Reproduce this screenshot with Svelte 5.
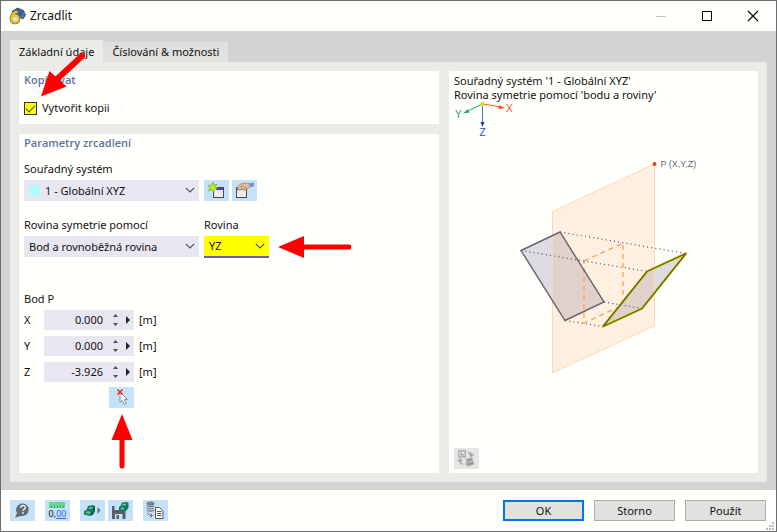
<script>
  let tab = $state('base');
  let copy = $state(true);
  let point = $state([
    { axis: 'X', value: '0.000' },
    { axis: 'Y', value: '0.000' },
    { axis: 'Z', value: '-3.926' }
  ]);
</script>

{#snippet chevron()}
  <svg class="chevron" width="10" height="6" viewBox="0 0 10 6" aria-hidden="true"><path d="M.8 .8 5 5 9.2 .8" fill="none" stroke="#505058" stroke-width="1.2" /></svg>
{/snippet}

<div class="window">
  <header>
    <svg width="18" height="18" viewBox="0 0 18 18" aria-hidden="true">
      <path d="M4 4.500 9.500 1l6 2.500L17.500 8 15 12l-4-2-6-4z" fill="#4f74b8" stroke="#2e4470" stroke-width=".8" />
      <path d="M6 4l9 4M8 2l8 4M10.500 2 8.500 6M14 3l-2.500 6" stroke="#26395f" stroke-width=".6" />
      <path d="M9.500 4.500C6 5 3.500 8 3.500 12" fill="none" stroke="#6c5b14" stroke-width="3.600" />
      <circle cx="7" cy="12" r="3.500" fill="#fffffc" stroke="#6c5b14" stroke-width="3.600" />
      <path d="M9.500 4.500C6 5 3.500 8 3.500 12" fill="none" stroke="#e6c63a" stroke-width="2.400" />
      <circle cx="7" cy="12" r="3.500" fill="#dce0e8" stroke="#e6c63a" stroke-width="2.400" />
    </svg>
    <h1>Zrcadlit</h1>
    <div class="controls">
      <button aria-label="Minimalizovat"><svg width="12" height="12" viewBox="0 0 12 12"><path d="M1 6.500h10" stroke="#c5c7c3" /></svg></button>
      <button aria-label="Maximalizovat"><svg width="12" height="12" viewBox="0 0 12 12"><path d="M1.500 1.500h9v9h-9z" fill="none" stroke="#000" /></svg></button>
      <button aria-label="Zavřít"><svg width="12" height="12" viewBox="0 0 12 12"><path d="m1 1 10 10M11 1 1 11" stroke="#000" stroke-width="1.100" /></svg></button>
    </div>
  </header>

  <main>
    <div class="tabs" role="tablist">
      <button role="tab" aria-selected={tab === 'base'} class:active={tab === 'base'} onclick={() => (tab = 'base')}>Základní údaje</button>
      <button role="tab" aria-selected={tab === 'opts'} class:active={tab === 'opts'} onclick={() => (tab = 'opts')}>Číslování &amp; možnosti</button>
    </div>

    <div class="panel">
      <div class="left">
        <section class="card">
          <h2>Kopírovat</h2>
          <label class="check"><input type="checkbox" bind:checked={copy} />Vytvořit kopii</label>
        </section>

        <section class="card grow">
          <h2>Parametry zrcadlení</h2>
          <div class="group first">
            <label class="caption" for="cs">Souřadný systém</label>
            <div class="line">
              <div class="select wide">
                <span class="swatch"></span>
                <select id="cs" class="with-swatch"><option>1 - Globální XYZ</option></select>
                {@render chevron()}
              </div>
              <div class="pair">
                <button class="tool" aria-label="Nový souřadný systém">
                  <svg width="21" height="19" viewBox="0 0 21 19">
                    <rect x="7.500" y="6.500" width="10" height="10" fill="#ececec" stroke="#4a4a4a" />
                    <path d="M8 7h2v2H8z" fill="#fff" /><path d="M10 7h7v2h-7z" fill="#3c43e0" />
                    <path d="m7 1 1 3.300L11 3 9.300 5.700 12 7.500 8.500 8 8 11.500 6 8.500 2.500 10 4 7 2 4.500l3.500-.2z" fill="#c0ec20" stroke="#5c9c20" stroke-width=".6" />
                  </svg>
                </button>
                <button class="tool" aria-label="Upravit souřadný systém">
                  <svg width="21" height="19" viewBox="0 0 21 19">
                    <rect x="2.500" y="6.500" width="10" height="10" fill="#ececec" stroke="#4a4a4a" />
                    <path d="M3 7h9v2H3z" fill="#3c43e0" />
                    <path d="m14 2.500 6-1v4l-5 1z" fill="#6a9ad4" />
                    <path d="M3 7.500C3.500 5 7 2 10 2c3.500 0 6 .5 6.500 3L13.500 8 10 9.500 8.500 8.500 5.500 9z" fill="#dcbc9c" stroke="#9a7a5c" stroke-width=".7" />
                    <path d="m6 6.500 3-2M8.500 8l3-2.500M11 8.500 13 7" stroke="#9a7a5c" stroke-width=".7" />
                  </svg>
                </button>
              </div>
            </div>
          </div>

          <div class="line second">
            <div class="group wide">
              <label class="caption" for="by">Rovina symetrie pomocí</label>
              <div class="select">
                <select id="by"><option>Bod a rovnoběžná rovina</option></select>
                {@render chevron()}
              </div>
            </div>
            <div class="group narrow">
              <label class="caption" for="plane">Rovina</label>
              <div class="select marked">
                <select id="plane"><option>YZ</option></select>
                {@render chevron()}
              </div>
              <svg class="arrow a-plane" width="73" height="24" viewBox="0 0 73 24" aria-hidden="true"><path d="M0 12 26 1v22z" fill="#f00" /><path d="M25 12h46" stroke="#f00" stroke-width="5" stroke-linecap="round" /></svg>
            </div>
          </div>

          <div class="point">
            <div class="caption">Bod P</div>
            <div class="rows">
              {#each point as p}
                <div class="row">
                  <label for={'p' + p.axis}>{p.axis}</label>
                  <div class="num">
                    <input id={'p' + p.axis} type="text" bind:value={p.value} />
                    <svg width="20" height="14" viewBox="0 0 20 14" aria-hidden="true"><path d="M0 4 2.500 1 5 4zM0 10l2.500 3L5 10z" fill="#505050" /><path d="m13 3 4 4-4 4z" fill="#222" /></svg>
                  </div>
                  <span>[m]</span>
                </div>
              {/each}
            </div>
            <div class="pick">
              <button class="tool" aria-label="Vybrat bod">
                <svg width="21" height="19" viewBox="0 0 21 19">
                  <path d="M9 4v10.500l2.300-2 2 4 2-.9-1.900-3.900 3-.2z" fill="#fff" stroke="#7c828c" stroke-width=".9" />
                  <path d="m6.500 1.500 5 5M11.500 1.500l-5 5" stroke="#f01818" stroke-width="1.400" />
                </svg>
              </button>
              <svg class="arrow a-pick" width="22" height="56" viewBox="0 0 22 56" aria-hidden="true"><path d="m11 0 10.500 26H.500z" fill="#f00" /><path d="M11 25v27" stroke="#f00" stroke-width="5" stroke-linecap="round" /></svg>
            </div>
          </div>
        </section>
      </div>

      <section class="card preview">
        <p>Souřadný systém '1 - Globální XYZ'</p>
        <p>Rovina symetrie pomocí 'bodu a roviny'</p>
        <svg class="scene" viewBox="454 102 299 346" preserveAspectRatio="xMidYMin meet" role="img" aria-label="Náhled zrcadlení">
          <path d="M482.500 104 469 110.500" stroke="#16a878" />
          <path d="m463 113.500 5-4.500 1.500 3.500z" fill="#16a878" />
          <path d="m482.500 104 17 2.800" stroke="#ff5a20" />
          <path d="m505 108-6.500 1 .7-3.800z" fill="#ff4010" />
          <path d="M482.500 104v19" stroke="#5878dc" />
          <path d="m482.500 127-2-5h4z" fill="#1738c8" />
          <circle cx="482.500" cy="104" r="2" fill="#e6d800" />
          <g font-size="10">
            <text x="455" y="118" fill="#16a878">Y</text>
            <text x="506" y="112" fill="#ff4a18">X</text>
            <text x="479.500" y="136" fill="#2848cc">Z</text>
          </g>
          <path d="m521 250.500 39-18.500 44 70-39 18.500z" fill="#dcdce2" />
          <path d="m686 253.500-39 18-44 55 39-18z" fill="#dcdce2" />
          <path d="m552.500 211.500 102-47.500v161.500l-102 47.500z" fill="#ff8c32" fill-opacity=".13" stroke="#fbd9b8" />
          <path d="m584 261 39-18v62l-39 18z" fill="none" stroke="#ffa050" stroke-width="1.300" stroke-dasharray="5 4" />
          <path d="m560 232 126 21.500M521 250.500l126 21M604 302l38 6.500M565 320.500l38 6" stroke="#66606e" stroke-width="1.200" stroke-dasharray="1.200 3" />
          <path d="m521 250.500 39-18.500 44 70-39 18.500z" fill="none" stroke="#6a606c" stroke-width="1.400" />
          <path d="m686 253.500-39 18-44 55 39-18z" fill="none" stroke="#dcdc20" stroke-width="2.800" stroke-linejoin="round" />
          <path d="m686 253.500-39 18-44 55 39-18z" fill="none" stroke="#5c5838" stroke-width="1.300" />
          <circle cx="654.500" cy="164" r="2" fill="#ff3c00" />
          <text x="660.500" y="167" font-size="9" fill="#6a6a78">P (X,Y,Z)</text>
        </svg>
        <button class="tool off" disabled aria-label="Přepnout náhled">
          <svg width="21" height="19" viewBox="0 0 21 19">
            <path d="M2.800 1.800h6.500v6H2.800z" fill="none" stroke="#a6a6a6" stroke-width="1.300" />
            <path d="M4.500 3.500h1.500V5h1.800v1.500H4.500z" fill="#a6a6a6" />
            <path d="M12 3.500c3 0 3.500 1 3.500 3M13.500 5l2 2.500L17.500 5M7 15c-2.500 0-3-2-3-4M2 12.500l2-2.500 2 2.500" fill="none" stroke="#a6a6a6" stroke-width="1.300" />
            <path d="m9 10 6-1.500 2 .8v2.700l1 1v3l-5.500 1.500-3-1.500v-3l1-1z" fill="#b4b4b4" />
            <path d="m11 11.500 5-1.300M11.500 15.500l5.500-1.500" stroke="#929292" stroke-width="1.300" />
          </svg>
        </button>
      </section>
    </div>
    <svg class="arrow a-copy" width="50" height="48" viewBox="0 0 50 48" aria-hidden="true"><path d="M0 46.500 8.500 21l17 15.500z" fill="#f00" /><path d="M15 30 41 6" stroke="#f00" stroke-width="6" stroke-linecap="round" /></svg>
  </main>

  <footer>
    <div class="tools">
      <button class="tool" aria-label="Nápověda">
        <svg width="21" height="19" viewBox="0 0 21 19">
          <path d="M3 16.500 5 12A6.300 6.300 0 1 1 9.500 15z" fill="#666a6c" />
          <path d="M8.600 6.700c0-2.900 4.800-2.900 4.800-.2 0 1.600-2.400 1.800-2.400 3.500M11 11v1.800" fill="none" stroke="#dcecf8" stroke-width="1.500" />
        </svg>
      </button>
      <button class="tool gap" aria-label="Jednotky a desetinná místa">
        <span class="units"><svg width="16" height="6" viewBox="0 0 16 6"><path d="M0 0h16v6H0z" fill="#68d890" /><path d="M2.500 6V3.500M5.500 6V3.500M8.500 6V3.500M11.500 6V3.500M14.500 6V3.500" stroke="#38a860" /></svg><span>0,<u>00</u></span></span>
      </button>
      <button class="tool gap" aria-label="Převzít z objektu">
        <svg width="21" height="19" viewBox="0 0 21 19">
          <path d="m2 10 2.500-1L6 5l5-1 2 1v5l-2 4-3 1-6-1.500z" fill="#14795a" />
          <path d="m7 6.500 3.500-.7v1.700l-3.500.8zM3.500 11l2-.8 3 .6-.5 2.200-3.500-.4z" fill="#6cc4a0" />
          <path d="M12 6v5l-3 2" fill="none" stroke="#0b4a38" />
          <path d="m15.500 6 3 3.500-3 3.500z" fill="#666a6c" />
        </svg>
      </button>
      <button class="tool" aria-label="Uložit nastavení">
        <svg width="21" height="19" viewBox="0 0 21 19">
          <path d="M2 5h10l3.500 3v10H2z" fill="#5c6064" />
          <path d="M4.500 5H11v4H4.500zM5 13h7.500v5H5z" fill="#c4e2f8" />
          <path d="M6.500 14h2.500v4H6.500z" fill="#5c6064" />
          <path d="m9 6 1.500-1L12 1.500 17 1l1.500 1v5L16 10l-3.500 1L9 9z" fill="#14795a" />
          <path d="m12.500 3 3.500-.5v1.700l-3.500.6zM10.500 7l1.500-.6 2.300.5-.4 1.800-2.600-.3z" fill="#6cc4a0" />
        </svg>
      </button>
      <button class="tool gap" aria-label="Načíst z databáze">
        <svg width="21" height="19" viewBox="0 0 21 19">
          <ellipse cx="5.500" cy="2.500" rx="3.500" ry="1.500" fill="#8a8e92" stroke="#666a6e" />
          <path d="M2 4.500c1 1.600 6 1.600 7 0M2 6.800c1 1.600 6 1.600 7 0M2 9c1 1.600 6 1.600 7 0" fill="none" stroke="#666a6e" stroke-width="1.200" />
          <path d="M3 11.500c0 2 1 3 4 3M5.500 12.500l2 2-2 2" fill="none" stroke="#666a6e" />
          <path d="M10.500 6.500h4l3.500 3.500v7.500h-7.500z" fill="#fff" stroke="#54585c" />
          <path d="M12 10.500h4.500M12 12.500h4.500M12 14.500h4.500" stroke="#54585c" />
        </svg>
      </button>
    </div>
    <div class="actions">
      <button class="default">OK</button>
      <button>Storno</button>
      <button>Použít</button>
    </div>
    <svg class="grip" width="9" height="9" viewBox="0 0 9 9" aria-hidden="true"><path d="M6 0h2v2H6zM3 3h2v2H3zM6 3h2v2H6zM0 6h2v2H0zM3 6h2v2H3zM6 6h2v2H6z" fill="#bcbcbc" /></svg>
  </footer>
</div>

<style>
  .window {
    box-sizing: border-box;
    min-height: 100vh;
    display: flex;
    flex-direction: column;
    border: 1px solid #6c6c6c;
    background: #fffffc;
    color: #111;
    font: 11px/18px 'Noto Sans', 'Open Sans', sans-serif;
  }
  button, input, select { font: inherit; color: inherit; margin: 0; border: 0; border-radius: 0; box-sizing: border-box; }
  h1, h2, p { margin: 0; }
  svg { display: block; }

  header { display: flex; align-items: center; height: 30px; padding-left: 7px; gap: 4px; }
  h1 { font-size: 12px; font-weight: 400; flex: 1; }
  .controls { display: flex; }
  .controls button { width: 46px; height: 30px; padding: 0; background: none; display: grid; place-items: center; }

  main { position: relative; flex: 1; display: flex; flex-direction: column; background: #d3d3d5; padding: 9px 9px 8px; }
  .tabs { display: flex; align-items: flex-end; }
  .tabs button { height: 20px; padding: 0 9px; background: #e0e0df; }
  .tabs button.active { height: 22px; padding-top: 2px; background: #ebece8; }
  .panel { flex: 1; background: #ebece8; padding: 9px; display: grid; grid-template-columns: 420fr 309fr; gap: 10px; }
  .left { display: flex; flex-direction: column; gap: 10px; }
  .card { background: #fffffc; padding: 0 5px 6px; }
  .grow { flex: 1; }
  h2 { font: 600 11px/18px 'Open Sans', 'Noto Sans', sans-serif; color: #5d739c; }

  .check { display: flex; align-items: center; gap: 5px; height: 20px; margin-top: 9px; }
  .check input { appearance: none; width: 13px; height: 13px; background: #ff0; border: 1px solid #333; display: grid; place-items: center; }
  .check input:checked::after { content: ''; width: 9px; height: 5px; box-sizing: border-box; border: solid #444; border-width: 0 0 1px 1px; transform: translateY(-1px) rotate(-45deg); }

  .group.first { margin-top: 8px; }
  .caption { display: block; margin-bottom: 2px; }
  .line { display: flex; gap: 5px; }
  .pair { display: flex; gap: 3px; }
  .second { margin-top: 15px; }
  .wide { width: 175px; }
  .narrow { position: relative; width: 65px; }
  .select { position: relative; }
  select { appearance: none; display: block; width: 100%; height: 21px; padding: 0 20px 0 5px; background: #e8e6f0; outline: 0; }
  .with-swatch { padding-left: 21px; }
  .swatch { position: absolute; left: 5px; top: 5px; width: 11px; height: 11px; background: #b0fcfc; }
  .chevron { position: absolute; right: 4px; top: 7px; pointer-events: none; }
  .marked select { height: 22px; background: #ff0; border-bottom: 2px solid #6a5fa8; }

  .point { margin-top: 32px; }
  .rows { display: grid; gap: 6px; }
  .row { display: flex; height: 20px; line-height: 20px; gap: 5px; }
  .row label { width: 15px; }
  .num { display: flex; align-items: center; width: 90px; background: #e8e6f0; }
  .num input { width: 65px; height: 20px; padding: 0 6px 0 0; background: none; text-align: right; outline: 0; }
  .num svg { margin-left: 4px; }
  .pick { position: relative; width: 25px; margin: 5px 0 0 85px; }

  .tool { width: 25px; height: 21px; padding: 0; background: #c5e2f8; display: grid; place-items: center; }
  .off { background: #e5e5e4; }

  .preview { display: flex; flex-direction: column; padding: 3px 5px 4px; }
  .preview p { line-height: 14px; }
  .scene { flex: 1; width: 100%; min-height: 320px; font-family: 'Liberation Sans', Arial, sans-serif; }

  footer { position: relative; display: flex; justify-content: space-between; align-items: center; padding: 10px 10px 10px 9px; }
  .tools { display: flex; gap: 3px; }
  .tools .gap { margin-left: 7px; }
  .units { display: grid; justify-items: center; font: 9px/11px 'Noto Sans', sans-serif; }
  .units u { color: #3468d8; }
  .actions { display: flex; gap: 10px; }
  .actions button { width: 81px; height: 21px; padding: 0; line-height: 17px; background: #e1e1e0; border: 1px solid #adadad; }
  .actions .default { border: 2px solid #0078e8; }
  .grip { position: absolute; right: 1px; bottom: 0; }

  .arrow { position: absolute; pointer-events: none; }
  .a-copy { left: 40px; top: 19px; }
  .a-plane { left: 74px; top: 19px; }
  .a-pick { left: 2px; top: 27px; }
</style>
